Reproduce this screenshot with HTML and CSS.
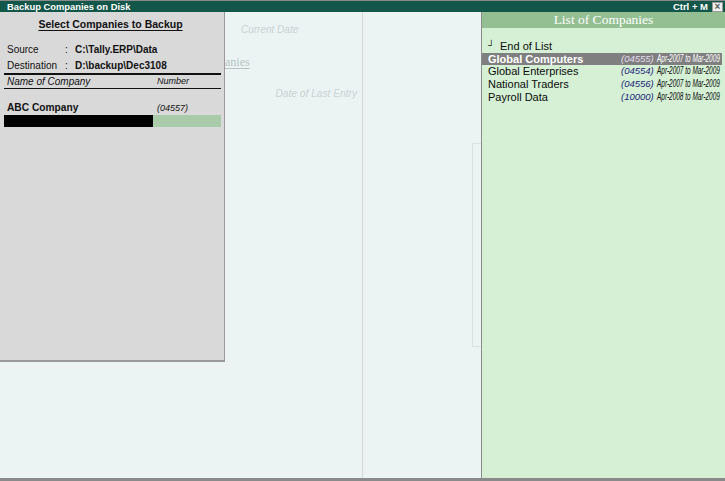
FILE: index.html
```html
<!DOCTYPE html>
<html>
<head>
<meta charset="utf-8">
<link rel="stylesheet" href="styles.css">
</head>
<body>
<div class="screen">
  <div class="topline"></div>
  <div class="titlebar">
    <span class="title">Backup Companies on Disk</span>
    <span class="shortcut">Ctrl + M</span>
    <span class="close">&#215;</span>
  </div>
  <div class="work">
    <div class="backup">
      <div class="panel-title"><span>Select Companies to Backup</span></div>
      <div class="field first"><span class="lbl">Source</span><span class="colon">:</span><span class="val">C:\Tally.ERP\Data</span></div>
      <div class="field"><span class="lbl">Destination</span><span class="colon">:</span><span class="val">D:\backup\Dec3108</span></div>
      <div class="rule-thick"></div>
      <div class="colhead"><span class="cname">Name of Company</span><span class="cnum">Number</span></div>
      <div class="rule-thin"></div>
      <div class="company"><span class="cname">ABC Company</span><span class="cnum">(04557)</span></div>
      <div class="entry"><div class="entry-name"></div><div class="entry-num"></div></div>
    </div>
    <div class="bgcol1">
      <div class="bg-current">Current Date</div>
      <div class="bg-heading">anies</div>
      <div class="bg-last">Date of Last Entry</div>
    </div>
    <div class="divider"></div>
    <div class="bgcol2">
      <div class="ghostbox"></div>
    </div>
    <div class="list">
      <div class="list-head">List of Companies</div>
      <div class="list-body">
        <div class="row end"><span class="mark">&#9496;</span><span class="name">End of List</span></div>
        <div class="row sel"><span class="name">Global Computers</span><span class="num">(04555)</span><span class="period"><span>Apr-2007 to Mar-2009</span></span></div>
        <div class="row"><span class="name">Global Enterprises</span><span class="num">(04554)</span><span class="period"><span>Apr-2007 to Mar-2009</span></span></div>
        <div class="row"><span class="name">National Traders</span><span class="num">(04556)</span><span class="period"><span>Apr-2007 to Mar-2009</span></span></div>
        <div class="row"><span class="name">Payroll Data</span><span class="num">(10000)</span><span class="period"><span>Apr-2008 to Mar-2009</span></span></div>
      </div>
    </div>
  </div>
  <div class="bottomline"></div>
</div>
</body>
</html>
```
FILE: styles.css
```css
html, body {
  margin: 0;
  padding: 0;
}
body {
  width: 725px;
  height: 481px;
  overflow: hidden;
  font-family: "Liberation Sans", Arial, sans-serif;
  background: #ebf4f3;
}
.screen {
  display: flex;
  flex-direction: column;
  height: 481px;
}
.topline {
  height: 1px;
  background: #8a8a8a;
}
.titlebar {
  height: 11px;
  background: #13574a;
  display: flex;
  align-items: center;
  padding: 0 2px 0 7px;
  color: #fff;
}
.title {
  font-size: 9.4px;
  font-weight: bold;
  flex: 1;
}
.shortcut {
  font-size: 9.5px;
  font-weight: bold;
  margin-right: 4px;
}
.close {
  width: 9px;
  height: 8px;
  background: #f0f0f0;
  border: 1px solid #9a9a9a;
  color: #555;
  font-size: 10px;
  line-height: 8px;
  text-align: center;
  font-weight: bold;
}
.work {
  flex: 1;
  display: flex;
  background: #ebf4f3;
  min-height: 0;
}
.bottomline {
  height: 3px;
  background: #8a8a8a;
}

/* Left backup panel */
.backup {
  width: 224px;
  height: 348px;
  background: #d9d9d9;
  border-right: 1px solid #9a9a9a;
  border-bottom: 2px solid #9a9a9a;
  flex-shrink: 0;
  color: #111;
  font-size: 10px;
}
.panel-title {
  text-align: center;
  line-height: 24px;
  font-size: 10.5px;
  font-weight: bold;
  padding-right: 3px;
}
.panel-title span {
  text-decoration: underline;
  text-underline-offset: 2px;
}
.field {
  display: flex;
  line-height: 15.5px;
  padding-left: 7px;
}
.field.first {
  margin-top: 6px;
}
.lbl {
  width: 58px;
}
.colon {
  width: 10px;
}
.val {
  font-weight: bold;
}
.rule-thick {
  height: 2px;
  background: #111;
  margin: 0 3px 0 4px;
}
.colhead, .company {
  display: flex;
  padding-left: 7px;
}
.colhead {
  line-height: 13px;
  font-style: italic;
}
.colhead .cname, .company .cname {
  width: 150px;
}
.cnum {
  font-size: 9px;
  font-style: italic;
}
.rule-thin {
  height: 1px;
  background: #111;
  margin: 0 3px 0 4px;
}
.company {
  margin-top: 12px;
  line-height: 14px;
}
.company .cname {
  font-weight: bold;
  font-size: 10.2px;
}
.entry {
  display: flex;
  height: 12px;
  margin: 0 3px 0 4px;
}
.entry-name {
  width: 149px;
  background: #000;
}
.entry-num {
  flex: 1;
  background: #a9cba9;
}

/* background (underlying screen) */
.bgcol1 {
  width: 137px;
  flex-shrink: 0;
  display: flex;
  flex-direction: column;
  color: #c9d3d3;
  font-style: italic;
}
.bg-current {
  margin: 12px 0 0 16px;
  line-height: 12px;
  font-size: 10px;
}
.bg-heading {
  margin-top: 20px;
  font-family: "Liberation Serif", serif;
  font-style: normal;
  font-size: 12px;
  line-height: 12px;
  color: #b7c2c2;
  text-decoration: underline;
  text-underline-offset: 2px;
}
.bg-last {
  margin-top: 20px;
  text-align: right;
  padding-right: 5px;
  font-size: 10.2px;
  line-height: 12px;
}
.divider {
  width: 1px;
  background: #d3d9d9;
  flex-shrink: 0;
}
.bgcol2 {
  flex: 1;
  display: flex;
  justify-content: flex-end;
}
.ghostbox {
  width: 8px;
  height: 202px;
  margin-top: 131px;
  border: 1px solid #dbe2e2;
  border-right: none;
}

/* Right list of companies */
.list {
  width: 243px;
  border-left: 1px solid #8c8c8c;
  background: #d5f0d5;
  flex-shrink: 0;
  display: flex;
  flex-direction: column;
}
.list-head {
  height: 16px;
  line-height: 15px;
  background: #93bf93;
  color: #fff;
  text-align: center;
  font-family: "Liberation Serif", serif;
  font-size: 13.5px;
}
.list-body {
  padding-top: 12px;
}
.row {
  display: flex;
  align-items: center;
  height: 12.7px;
  line-height: 12.7px;
  padding-left: 6px;
  margin-right: 3px;
  font-size: 11px;
  color: #0c0c0c;
  white-space: nowrap;
}
.row.end .mark {
  font-size: 9px;
  width: 12px;
  position: relative;
  top: -1px;
}
.row .name {
  flex: 1;
}
.row .num {
  font-size: 9.5px;
  font-style: italic;
  color: #1a1d78;
  width: 34px;
}
.row .period {
  width: 65px;
  margin-left: 2px;
  font-size: 10px;
  font-style: italic;
  overflow: visible;
}
.row .period span {
  display: inline-block;
  transform: scaleX(0.645);
  transform-origin: left center;
}
.row.sel {
  background: #7f7f7f;
  color: #fff;
}
.row.sel .name {
  font-weight: bold;
}
.row.sel .num {
  color: #e6def0;
}
```
